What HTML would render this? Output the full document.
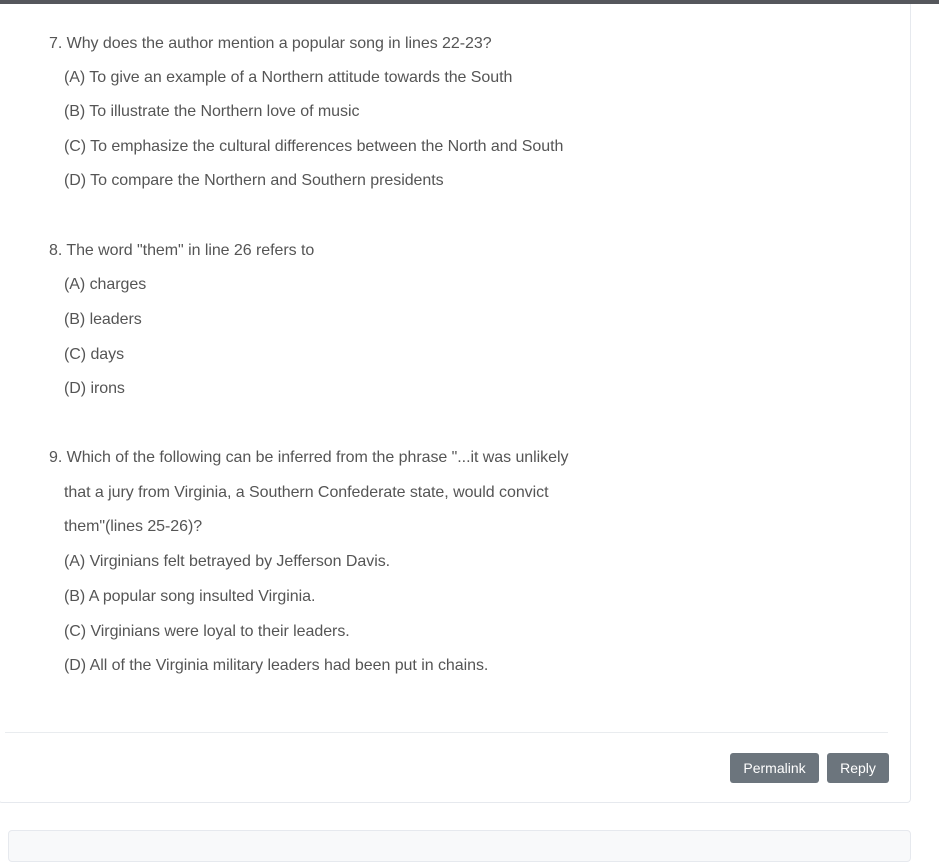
<!DOCTYPE html>
<html><head><meta charset="utf-8"><style>
body{margin:0;width:939px;height:845px;background:#fff;position:relative;overflow:hidden;font-family:"Liberation Sans",sans-serif;color:#555;}
.top{position:absolute;left:0;top:0;width:939px;height:4px;background:#55575c;}
.card{position:absolute;left:-2px;top:4px;width:911px;height:798px;border:1px solid #e6e9ee;border-top:none;border-radius:0 0 4px 4px;}
.l{position:absolute;font-size:16px;white-space:nowrap;letter-spacing:-0.05px;}
.hr{position:absolute;left:5px;top:732px;width:883px;height:1px;background:#e9ecef;}
.btn{position:absolute;top:753px;height:30px;background:#6c757d;color:#fff;border-radius:3px;font-size:14px;line-height:30px;text-align:center;}
.card2{position:absolute;left:8px;top:830px;width:901px;height:30px;background:#f8f9fa;border:1px solid #e6e9ee;border-radius:4px;}
</style></head><body>
<div class="top"></div>
<div class="card"></div>
<div class="l" style="left:49px;top:35px">7. Why does the author mention a popular song in lines 22-23?</div>
<div class="l" style="left:64px;top:69px">(A) To give an example of a Northern attitude towards the South</div>
<div class="l" style="left:64px;top:103px">(B) To illustrate the Northern love of music</div>
<div class="l" style="left:64px;top:138px">(C) To emphasize the cultural differences between the North and South</div>
<div class="l" style="left:64px;top:172px">(D) To compare the Northern and Southern presidents</div>
<div class="l" style="left:49px;top:242px">8. The word "them" in line 26 refers to</div>
<div class="l" style="left:64px;top:276px">(A) charges</div>
<div class="l" style="left:64px;top:311px">(B) leaders</div>
<div class="l" style="left:64px;top:346px">(C) days</div>
<div class="l" style="left:64px;top:380px">(D) irons</div>
<div class="l" style="left:49px;top:449px">9. Which of the following can be inferred from the phrase "...it was unlikely</div>
<div class="l" style="left:64px;top:484px">that a jury from Virginia, a Southern Confederate state, would convict</div>
<div class="l" style="left:64px;top:518px">them"(lines 25-26)?</div>
<div class="l" style="left:64px;top:553px">(A) Virginians felt betrayed by Jefferson Davis.</div>
<div class="l" style="left:64px;top:588px">(B) A popular song insulted Virginia.</div>
<div class="l" style="left:64px;top:623px">(C) Virginians were loyal to their leaders.</div>
<div class="l" style="left:64px;top:657px">(D) All of the Virginia military leaders had been put in chains.</div>
<div class="hr"></div>
<div class="btn" style="left:730px;width:89px">Permalink</div>
<div class="btn" style="left:827px;width:62px">Reply</div>
<div class="card2"></div>
</body></html>
